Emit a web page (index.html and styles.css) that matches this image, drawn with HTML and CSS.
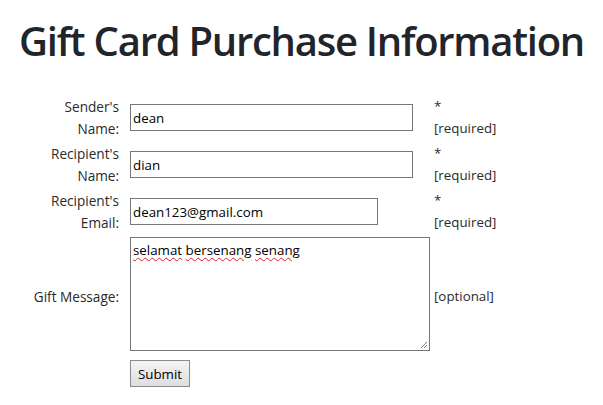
FILE: index.html
```html
<!DOCTYPE html>
<html lang="en">
<head>
<meta charset="utf-8">
<title>Gift Card Purchase Information</title>
<link rel="stylesheet" href="styles.css">
</head>
<body>
<h1 class="title">Gift Card Purchase Information</h1>
<form class="form">
  <label class="label" for="sender">Sender's<br>Name:</label>
  <div class="field"><input class="input input-wide" id="sender" type="text" value="dean"></div>
  <div class="note">*<br>[required]</div>

  <label class="label" for="recipient">Recipient's<br>Name:</label>
  <div class="field"><input class="input input-wide" id="recipient" type="text" value="dian"></div>
  <div class="note">*<br>[required]</div>

  <label class="label" for="email">Recipient's<br>Email:</label>
  <div class="field"><input class="input input-email" id="email" type="text" value="dean123@gmail.com"></div>
  <div class="note">*<br>[required]</div>

  <label class="label" for="message">Gift Message:</label>
  <div class="field field-message">
    <div class="textarea" id="message" role="textbox" aria-multiline="true"><span class="misspelled">selamat</span> <span class="misspelled">bersenang</span> <span class="misspelled">senang</span><svg class="grip" width="9" height="9" viewBox="0 0 9 9"><path d="M8 2 L2 8 M8 5 L5 8" stroke="#7a7a7a" stroke-width="1"/></svg></div>
  </div>
  <div class="note">[optional]</div>

  <div class="label"></div>
  <div class="field"><button class="button" type="button">Submit</button></div>
  <div class="note"></div>
</form>
</body>
</html>
```
FILE: styles.css
```css
html, body {
  margin: 0;
  padding: 0;
  background: #ffffff;
}
body {
  font-family: "Open Sans", "Noto Sans", sans-serif;
  color: #212529;
  font-size: 13.33px;
}
.title {
  margin: 17px 0 31px;
  font-size: 40px;
  line-height: 48px;
  font-weight: 600;
  letter-spacing: -1.25px;
  text-align: center;
  color: #212529;
}
.form {
  display: grid;
  grid-template-columns: 89px 300px auto;
  column-gap: 11px;
  row-gap: 4px;
  padding-left: 30px;
  align-items: center;
}
.label {
  text-align: right;
  font-size: 13.6px;
  line-height: 21.5px;
  color: #2a2a2a;
}
.note {
  margin-left: -7px;
  line-height: 21.5px;
  color: #2a2a2a;
}
.field {
  display: flex;
}
.field-message {
  padding-bottom: 5px;
}
.input {
  box-sizing: border-box;
  height: 27px;
  border: 1px solid #767676;
  padding: 1px 2px;
  font-family: inherit;
  font-size: 13.33px;
  color: #000;
  background: #fff;
  outline: none;
}
.input-wide { width: 283px; }
.input-email { width: 248px; }
.textarea {
  position: relative;
  box-sizing: border-box;
  width: 300px;
  height: 114px;
  border: 1px solid #767676;
  padding: 2px 2px;
  line-height: 21px;
  color: #000;
  background: #fff;
}
.misspelled {
  text-decoration: underline wavy #e02020;
  text-decoration-thickness: 1px;
  text-underline-offset: 2px;
}
.grip {
  position: absolute;
  right: 1px;
  bottom: 1px;
}
.button {
  box-sizing: border-box;
  width: 60px;
  height: 27px;
  border: 1px solid #8a8a8a;
  background: linear-gradient(#f4f4f4, #dedede);
  font-family: inherit;
  font-size: 13.33px;
  color: #000;
  padding: 0;
}
```
